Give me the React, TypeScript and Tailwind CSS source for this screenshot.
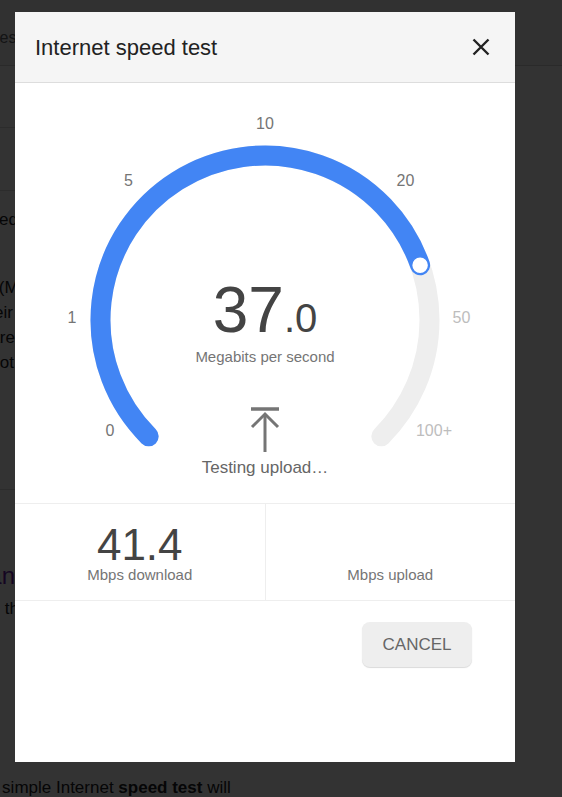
import React from 'react';

const CX = 250;
const CY = 237;
const R = 164.5;

function pt(deg: number) {
  const a = (deg * Math.PI) / 180;
  return [CX + R * Math.cos(a), CY + R * Math.sin(a)];
}

const ticks = [
  { label: '0', x: 95, y: 353, on: true },
  { label: '1', x: 57, y: 240, on: true },
  { label: '5', x: 113.5, y: 103, on: true },
  { label: '10', x: 250, y: 46, on: true },
  { label: '20', x: 390.5, y: 103, on: true },
  { label: '50', x: 446.5, y: 240, on: false },
  { label: '100+', x: 419, y: 353, on: false },
];

function Gauge() {
  const [sx, sy] = pt(135);
  const [ex, ey] = pt(45);
  const [kx, ky] = pt(340.54);

  return (
    <div className="relative h-[420px] w-full">
      <svg width="500" height="420" viewBox="0 0 500 420" className="block">
        <path
          d={`M ${sx} ${sy} A ${R} ${R} 0 1 1 ${ex} ${ey}`}
          fill="none"
          stroke="#eeeeee"
          strokeWidth="20"
          strokeLinecap="round"
        />
        <path
          d={`M ${sx} ${sy} A ${R} ${R} 0 1 1 ${kx} ${ky}`}
          fill="none"
          stroke="#4285f4"
          strokeWidth="20"
          strokeLinecap="round"
        />
        <circle cx={kx} cy={ky} r="8.5" fill="#fff" stroke="#4285f4" strokeWidth="1.5" />
        {ticks.map((t) => (
          <text
            key={t.label}
            x={t.x}
            y={t.y}
            textAnchor="middle"
            fontSize="16"
            fontFamily="'Liberation Sans', Arial, sans-serif"
            fill={t.on ? '#757575' : '#bdbdbd'}
          >
            {t.label}
          </text>
        ))}
      </svg>

      <div className="absolute inset-x-0 top-0 flex flex-col items-center pt-[195px]">
        <div className="text-[64px] leading-none text-[#444]">
          37<span className="text-[40px] leading-none">.0</span>
        </div>
        <div className="mt-[7px] text-[15px] leading-none text-[#757575]">Megabits per second</div>
        <svg width="30" height="48" viewBox="0 0 30 48" className="mt-[41px]">
          <g stroke="#757575" strokeWidth="3" fill="none">
            <line x1="1" y1="4" x2="29" y2="4" strokeWidth="3.5" />
            <polyline points="2,22 15,9 28,22" />
            <line x1="15" y1="9" x2="15" y2="47" />
          </g>
        </svg>
        <div className="mt-[6px] text-[17px] leading-none text-[#666]">Testing upload…</div>
      </div>
    </div>
  );
}

function Tail({ w, children, className = '' }: { w: string; children: React.ReactNode; className?: string }) {
  return (
    <div className={`flex justify-end ${w} ${className}`}>
      <span className="shrink-0 whitespace-nowrap">{children}</span>
    </div>
  );
}

export default function App() {
  return (
    <div className="relative h-[797px] w-[562px] overflow-hidden bg-white font-['Liberation_Sans',Arial,sans-serif]">
      {/* page behind the dialog */}
      <div className="text-[#202124]">
        <div className="h-[66px] border-b border-[#d0d0d0] bg-[#f2f2f2] pt-[28px]">
          <div className="-ml-[36px] text-[16px] leading-[20px] text-[#5f6368]">Images</div>
        </div>
        <div className="h-[62px] w-[510px] border-b border-[#dadada]" />
        <div className="h-[63px] w-[510px] border-b border-[#dadada]" />
        <div className="text-[17px] leading-[24px]">
          <Tail w="w-[18px]" className="mt-[17px]">Check your internet speed</Tail>
          <div className="mt-[43px] leading-[25px]">
            <Tail w="w-[46px]">measured in megabits per second (Mbps</Tail>
            <Tail w="w-[13px]">providers and their</Tail>
            <Tail w="w-[15px]">the results are</Tail>
            <Tail w="w-[14px]">whether or not</Tail>
          </div>
        </div>
        <div className="h-[115px] w-[510px] border-b border-[#dadada]" />
        <Tail w="w-[15px]" className="mt-[71px] text-[24px] leading-[30px] text-[#681da8]">Speedtest by Ookla - The Global Broadband Speed Test an</Tail>
        <Tail w="w-[19px]" className="mt-[6px] text-[17px] leading-[24px]">Use Speedtest on all th</Tail>
        <div className="-ml-[13px] mt-[155px] whitespace-nowrap text-[17px] leading-[24px]">
          A simple Internet <b>speed test</b> will
        </div>
      </div>

      <div className="absolute inset-0 bg-black/80" />

      {/* dialog */}
      <div className="absolute left-[15px] top-[12px] flex h-[750px] w-[500px] flex-col bg-white">
        <div className="flex h-[71px] items-center justify-between border-b border-[#dddddd] bg-[#f5f5f5] pl-[20px] pr-[25px]">
          <h2 className="text-[22px] text-[#222]">Internet speed test</h2>
          <svg width="18" height="18" viewBox="0 0 18 18">
            <path d="M1.5 1.5 16.5 16.5M16.5 1.5 1.5 16.5" stroke="#222" strokeWidth="2.4" />
          </svg>
        </div>

        <Gauge />

        <div className="flex h-[98px] border-y border-[#eeeeee]">
          <div className="flex flex-1 flex-col items-center pt-[19px]">
            <div className="h-[46px] text-[44px] leading-none text-[#444]">41.4</div>
            <div className="-mt-[2px] text-[15px] leading-none text-[#757575]">Mbps download</div>
          </div>
          <div className="flex flex-1 flex-col items-center border-l border-[#eeeeee] pt-[19px]">
            <div className="h-[44px]" />
            <div className="text-[15px] leading-none text-[#757575]">Mbps upload</div>
          </div>
        </div>

        <div className="flex justify-end pr-[43px] pt-[21px]">
          <button className="h-[45px] w-[110px] rounded-[8px] bg-[#eeeeee] text-[17px] text-[#666] shadow-[0_1px_1px_rgba(0,0,0,0.15)]">
            CANCEL
          </button>
        </div>
      </div>
    </div>
  );
}
